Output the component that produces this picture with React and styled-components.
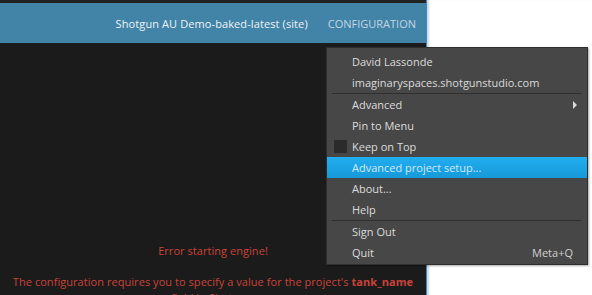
import React from 'react';
import styled, { createGlobalStyle } from 'styled-components';

const GlobalStyle = createGlobalStyle`
  html, body {
    margin: 0;
    padding: 0;
    background: #ffffff;
    font-family: "Open Sans", "DejaVu Sans", sans-serif;
    overflow: hidden;
  }
`;

const Page = styled.div`
  position: relative;
  display: flex;
  width: 592px;
  height: 295px;
  overflow: hidden;
`;

const AppPanel = styled.div`
  width: 426px;
  height: 295px;
  background: #1b1b1b;
  border-right: 1px solid #2b8fe0;
  display: flex;
  flex-direction: column;
  flex-shrink: 0;
  overflow: hidden;
`;

const TopStrip = styled.div`
  height: 3px;
  flex-shrink: 0;
  background: #222222;
`;

const Header = styled.div`
  height: 40px;
  flex-shrink: 0;
  background: #4283a8;
  display: flex;
  align-items: center;
  justify-content: flex-end;
  gap: 20px;
  padding-right: 10px;
`;

const Title = styled.span`
  color: ${(p) => (p.muted ? '#c3d6e2' : '#eef3f6')};
  font-size: 11px;
  letter-spacing: ${(p) => (p.muted ? '0' : '0.1px')};
`;

const Body = styled.div`
  flex-shrink: 0;
  display: flex;
  flex-direction: column;
  align-items: center;
  padding-top: 200px;
  color: #c9433a;
  font-size: 11px;
  text-align: center;
`;

const ErrorLine = styled.div`
  line-height: 16px;
  margin-bottom: ${(p) => p.gap || 0}px;
  white-space: nowrap;
  letter-spacing: 0.05px;
  b {
    font-weight: 700;
  }
`;

const Desktop = styled.div`
  flex: 1;
  background: #ffffff;
  box-shadow: inset 3px 0 2px -1px #d6d6d6;
`;

const Menu = styled.div`
  position: absolute;
  left: 326px;
  top: 47px;
  width: 260px;
  background: #474747;
  border: 1px solid #2e2e2e;
  box-shadow: 1px 1px 2px rgba(0, 0, 0, 0.35);
  padding: 3px 0 1px;
  display: flex;
  flex-direction: column;
`;

const Item = styled.div`
  position: relative;
  height: 21px;
  display: flex;
  align-items: center;
  padding: 0 14px 0 25px;
  font-size: 11px;
  color: ${(p) => (p.active ? '#cfe9f7' : '#dcdcdc')};
  background: ${(p) => (p.active ? 'linear-gradient(#22aef0, #1699d8)' : 'transparent')};
`;

const Label = styled.span`
  flex: 1;
  white-space: nowrap;
`;

const Shortcut = styled.span`
  color: #d0d0d0;
`;

const Check = styled.span`
  position: absolute;
  left: 7px;
  top: 4px;
  width: 13px;
  height: 13px;
  background: #2b2b2b;
  border-radius: 1px;
`;

const Arrow = styled.span`
  width: 0;
  height: 0;
  border-top: 4px solid transparent;
  border-bottom: 4px solid transparent;
  border-left: 4px solid #d8d8d8;
  margin-right: -4px;
`;

const Separator = styled.div`
  height: 1px;
  background: #2f2f2f;
  margin: 0 6px 0 5px;
`;

export default function App() {
  return (
    <>
      <GlobalStyle />
      <Page>
        <AppPanel>
          <TopStrip />
          <Header>
            <Title>Shotgun AU Demo-baked-latest (site)</Title>
            <Title muted>CONFIGURATION</Title>
          </Header>
          <Body>
            <ErrorLine gap={15}>Error starting engine!</ErrorLine>
            <ErrorLine>
              The configuration requires you to specify a value for the project's <b>tank_name</b>
            </ErrorLine>
            <ErrorLine>field in Shotgun.</ErrorLine>
          </Body>
        </AppPanel>
        <Desktop />
        <Menu>
          <Item><Label>David Lassonde</Label></Item>
          <Item><Label>imaginaryspaces.shotgunstudio.com</Label></Item>
          <Separator />
          <Item><Label>Advanced</Label><Arrow /></Item>
          <Item><Label>Pin to Menu</Label></Item>
          <Item><Check /><Label>Keep on Top</Label></Item>
          <Item active><Label>Advanced project setup...</Label></Item>
          <Item><Label>About...</Label></Item>
          <Item><Label>Help</Label></Item>
          <Separator />
          <Item><Label>Sign Out</Label></Item>
          <Item><Label>Quit</Label><Shortcut>Meta+Q</Shortcut></Item>
        </Menu>
      </Page>
    </>
  );
}
